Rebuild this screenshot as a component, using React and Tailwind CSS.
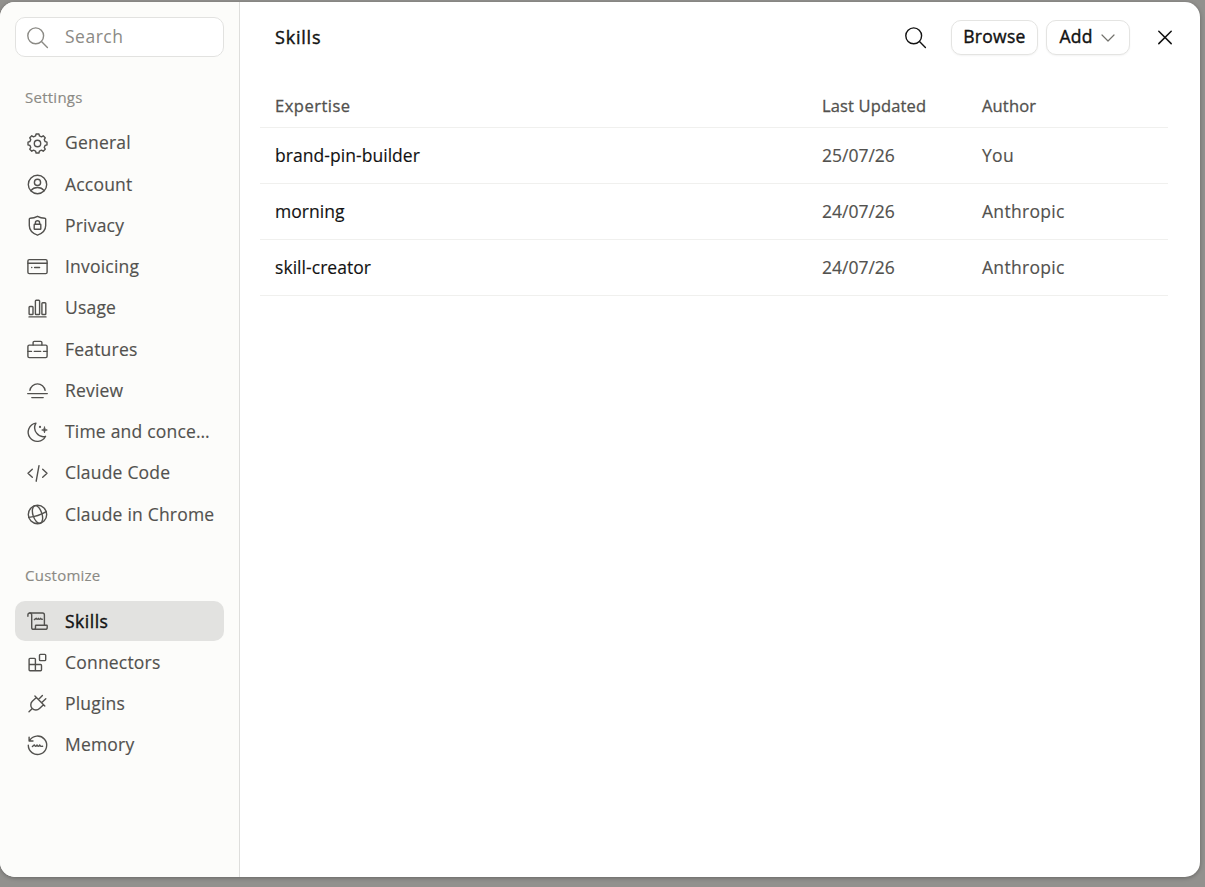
import { useState } from "react";

// eight rounded teeth around the centre of a 25x25 box
function gearPath() {
  const points = [];
  for (let i = 0; i < 8; i++) {
    [[-14.5, 7.8], [-8.5, 9.6], [8.5, 9.6], [14.5, 7.8]].forEach(([offset, radius]) => {
      const angle = ((i * 45 + offset) * Math.PI) / 180;
      points.push(`${(12.5 + radius * Math.sin(angle)).toFixed(2)} ${(12.5 - radius * Math.cos(angle)).toFixed(2)}`);
    });
  }
  return `M${points.join("L")}Z`;
}

function Icon({ children, className = "" }) {
  return (
    <svg
      viewBox="0 0 25 25"
      fill="none"
      stroke="currentColor"
      strokeWidth="1.4"
      strokeLinecap="round"
      strokeLinejoin="round"
      className={`size-[25px] shrink-0 ${className}`}
    >
      {children}
    </svg>
  );
}

const icons = {
  search: (
    <>
      <circle cx="10.7" cy="10.8" r="7.9" />
      <path d="m16.5 16.6 5.9 5.8" />
    </>
  ),
  gear: (
    <>
      <path d={gearPath()} />
      <circle cx="12.5" cy="12.5" r="3.2" />
    </>
  ),
  account: (
    <>
      <circle cx="12.5" cy="12.5" r="9.2" />
      <circle cx="12.5" cy="10.4" r="3.1" />
      <path d="M5.9 18.6c1.5-2 3.9-3.1 6.6-3.1s5.1 1.1 6.6 3.1" />
    </>
  ),
  privacy: (
    <>
      <path d="M12.5 3.3c-2.3 1.3-5 1.9-7.4 2-.5 0-.8.4-.8.9v6.3c0 4.9 3.6 8 8.2 9.7 4.6-1.7 8.2-4.8 8.2-9.7V6.2c0-.5-.3-.9-.8-.9-2.4-.1-5.1-.7-7.4-2Z" />
      <rect x="9.2" y="11.3" width="6.6" height="4.9" rx=".5" />
      <path d="M10.4 11.3V9.8a2.1 2.1 0 0 1 4.2 0v1.5" />
    </>
  ),
  invoicing: (
    <>
      <rect x="2.9" y="5.6" width="19.2" height="14" rx="1.4" />
      <path d="M2.9 9.3h19.2M6.7 13.5h.1M9.6 13.5h5" />
    </>
  ),
  usage: (
    <>
      <rect x="4.1" y="10.5" width="3.9" height="8" rx=".8" />
      <rect x="10.4" y="4.3" width="4.2" height="14.2" rx=".8" />
      <rect x="16.9" y="6.7" width="3.9" height="11.8" rx=".8" />
      <path d="M4 20.9h17" />
    </>
  ),
  features: (
    <>
      <rect x="2.9" y="8.1" width="19.2" height="12.5" rx="1.4" />
      <path d="M8.1 8.1V5.6c0-.7.5-1.2 1.2-1.2h6.4c.7 0 1.2.5 1.2 1.2v2.5M3 14.4h3.5M9.3 14.4h6.4M18.5 14.4H22" />
    </>
  ),
  review: <path d="M4.9 12.3a7.7 7.7 0 0 1 15.2 0M2.7 15.6h19.6M6.8 19.6h11.4" />,
  moon: (
    <>
      <path d="M10.9 4.1a9.2 9.2 0 1 0 9.7 13.2C13.6 19.3 6.9 11.3 10.9 4.1Z" />
      <path
        d="M19.5 8c.2 2 .9 2.7 2.8 3-1.9.2-2.6.9-2.8 2.9-.3-2-.9-2.7-2.8-2.9 1.9-.3 2.5-1 2.8-3Z"
        fill="currentColor"
        strokeWidth=".8"
      />
      <circle cx="15" cy="7.9" r="1.1" fill="currentColor" stroke="none" />
    </>
  ),
  code: <path d="m7.3 8.3-4.3 4 4.3 4M17.7 8.3l4.3 4-4.3 4M14 4.7 11.2 20.2" />,
  globe: (
    <>
      <circle cx="12.5" cy="12.5" r="9.2" />
      <g transform="rotate(-18 12.5 12.5)">
        <ellipse cx="12.5" cy="12.5" rx="4.5" ry="9.2" />
        <path d="M3.3 12.5c5.3 1.2 13.1 1.2 18.4 0" />
      </g>
    </>
  ),
  scroll: (
    <>
      <path d="M2.9 7.2V5.9A1.9 1.9 0 0 1 4.8 4h12.7c1.1 0 1.9.8 1.9 1.9v10.2" />
      <path d="M4.8 4c1.1 0 1.9.8 1.9 1.9v12.5a1.9 1.9 0 0 0 1.9 1.9h11.7a1.9 1.9 0 0 0 1.9-1.9v-1.6a.6.6 0 0 0-.6-.6H11.1a.6.6 0 0 0-.6.6v1.6a1.9 1.9 0 0 1-1.9 1.9" />
      <path d="m9.4 10.6 1.8-1.4c.2 1.3 1.6 1.5 2.2.1.3 1.3 1.7 1.3 2.2 0 .3.9.9 1.1 1.7 1" />
    </>
  ),
  connectors: (
    <>
      <path d="M4.1 9.3c0-.5.4-.9.9-.9h4.5c.5 0 .9.4.9.9v5.200h5.200c.5 0 .9.400.9.900v4.400c0 .5-.4.900-.9.900H5c-.5 0-.9-.4-.9-.9V9.300ZM4.100 14.500h6.300v6.200" />
      <rect x="14.5" y="4.4" width="6.2" height="6.2" rx=".9" />
    </>
  ),
  plug: (
    <path d="m9.900 5.100 9.900 9.900M11.400 6.600 7.300 10.300a5.100 5.100 0 0 0 7.200 7.300l4-3.900M7.300 17.500l-3.300 3.200M13.500 8.600l3.900-4M16.600 11.700l4.200-4" />
  ),
  memory: (
    <>
      <path d="M4.1 4.100V8H8M4.500 7.700a9.200 9.200 0 1 1-1.200 4.600" />
      <path d="m7.400 13.500 2-1.600c.3 1.600 2 1.900 2.600.1.400 1.700 2.200 1.700 2.700 0 .4 1.200 1.400 1.600 2.900 1.300" />
    </>
  ),
};

const sections = [
  {
    title: "Settings",
    items: [
      { label: "General", icon: "gear" },
      { label: "Account", icon: "account" },
      { label: "Privacy", icon: "privacy" },
      { label: "Invoicing", icon: "invoicing" },
      { label: "Usage", icon: "usage" },
      { label: "Features", icon: "features" },
      { label: "Review", icon: "review" },
      { label: "Time and conce…", icon: "moon" },
      { label: "Claude Code", icon: "code" },
      { label: "Claude in Chrome", icon: "globe" },
    ],
  },
  {
    title: "Customize",
    items: [
      { label: "Skills", icon: "scroll" },
      { label: "Connectors", icon: "connectors" },
      { label: "Plugins", icon: "plug" },
      { label: "Memory", icon: "memory" },
    ],
  },
];

const skills = [
  { name: "brand-pin-builder", updated: "25/07/26", author: "You" },
  { name: "morning", updated: "24/07/26", author: "Anthropic" },
  { name: "skill-creator", updated: "24/07/26", author: "Anthropic" },
];

function NavItem({ item, active, onSelect }) {
  return (
    <button
      type="button"
      onClick={onSelect}
      className={`flex h-10 w-full items-center gap-[15px] rounded-[10px] pl-2.5 text-left text-[17.5px] ${
        active
          ? "bg-[#e2e2e0] tracking-[0.5px] text-[#121212] [-webkit-text-stroke:0.4px]"
          : "tracking-[0.2px] text-[#52514e] [-webkit-text-stroke:0.15px]"
      }`}
    >
      <Icon className="text-[#52514e]">{icons[item.icon]}</Icon>
      <span className="whitespace-nowrap pb-px">{item.label}</span>
    </button>
  );
}

function Sidebar() {
  const [active, setActive] = useState("Skills");

  return (
    <aside className="w-60 shrink-0 border-r border-[#dededc] bg-[#fcfcfa] px-[15px] pt-[15px]">
      <label className="flex h-10 items-center gap-[15px] rounded-[10px] border border-[#e2e2e0] bg-white pl-[9px] text-[17.5px] tracking-[0.5px] text-[#8b8a85]">
        <Icon>{icons.search}</Icon>
        <span className="pb-px">Search</span>
      </label>

      {sections.map((section, i) => (
        <nav key={section.title} className={i ? "mt-[30px]" : "mt-[29px]"}>
          <h2 className="mb-[15px] pl-2.5 text-[15px] leading-[22px] tracking-[0.25px] text-[#8b8a85] [-webkit-text-stroke:0.15px]">
            {section.title}
          </h2>
          <div className="flex flex-col gap-[1.25px]">
            {section.items.map((item) => (
              <NavItem
                key={item.label}
                item={item}
                active={active === item.label}
                onSelect={() => setActive(item.label)}
              />
            ))}
          </div>
        </nav>
      ))}
    </aside>
  );
}

function HeaderButton({ children, className = "" }) {
  return (
    <button
      type="button"
      className={`flex h-[35px] items-center justify-center rounded-[10px] border border-[#e4e4e2] bg-white pb-px shadow-[0_1px_2px_rgba(0,0,0,0.05)] [-webkit-text-stroke:0.4px] ${className}`}
    >
      {children}
    </button>
  );
}

export default function App() {
  return (
    <div className="h-[887px] w-[1205px] overflow-hidden bg-[#92918e] pt-0.5 font-['Open_Sans','Noto_Sans',sans-serif] text-[#121212]">
      <div className="flex h-[875px] w-[1200px] overflow-hidden rounded-[15px] bg-white shadow-[0_1px_4px_rgba(0,0,0,0.3)]">
        <Sidebar />

        <main className="flex-1 pl-5 pr-8">
          <header className="flex h-[70px] items-center pl-[15px] text-[17.5px]">
            <h1 className="mr-auto text-[18px] tracking-[0.8px] [-webkit-text-stroke:0.4px]">Skills</h1>
            <button type="button" className="mr-[23px]">
              <Icon>{icons.search}</Icon>
            </button>
            <HeaderButton className="w-[87px] tracking-[0.3px]">Browse</HeaderButton>
            <HeaderButton className="ml-2 mr-px w-[84px] gap-2 pr-0.5 tracking-[0.2px]">
              Add
              <svg viewBox="0 0 14 8" fill="none" stroke="#73726c" strokeWidth="1.2" strokeLinecap="round" strokeLinejoin="round" className="mt-0.5 h-2 w-3.5">
                <path d="m1 1 6 6 6-6" />
              </svg>
            </HeaderButton>
            <button type="button" className="-mr-[5px] ml-[26px]">
              <svg viewBox="0 0 16 16" fill="none" stroke="currentColor" strokeWidth="1.5" strokeLinecap="round" className="size-4">
                <path d="m1.8 2.2 12.4 12.4M14.2 2.2 1.8 14.6" />
              </svg>
            </button>
          </header>

          <table className="mt-[13px] w-full table-fixed border-collapse text-left text-[17.5px]">
            <colgroup>
              <col className="w-[547px]" />
              <col className="w-[160px]" />
              <col />
            </colgroup>
            <thead>
              <tr className="h-[42px] border-b border-[#f0f0ee] text-[16.5px] tracking-[0.15px] text-[#52514e] [-webkit-text-stroke:0.3px]">
                <th className="pl-[15px] pt-0.5 font-normal tracking-[0.5px]">Expertise</th>
                <th className="pl-[15px] pt-0.5 font-normal">Last Updated</th>
                <th className="pl-[15px] pt-0.5 font-normal">Author</th>
              </tr>
            </thead>
            <tbody>
              {skills.map((skill) => (
                <tr key={skill.name} className="h-14 border-b border-[#f0f0ee] text-[#52514e] [-webkit-text-stroke:0.15px]">
                  <td className="pl-[15px] tracking-[0.05px] text-[#121212]">{skill.name}</td>
                  <td className="pl-[15px]">{skill.updated}</td>
                  <td className="pl-[15px] tracking-[0.3px]">{skill.author}</td>
                </tr>
              ))}
            </tbody>
          </table>
        </main>
      </div>
    </div>
  );
}
